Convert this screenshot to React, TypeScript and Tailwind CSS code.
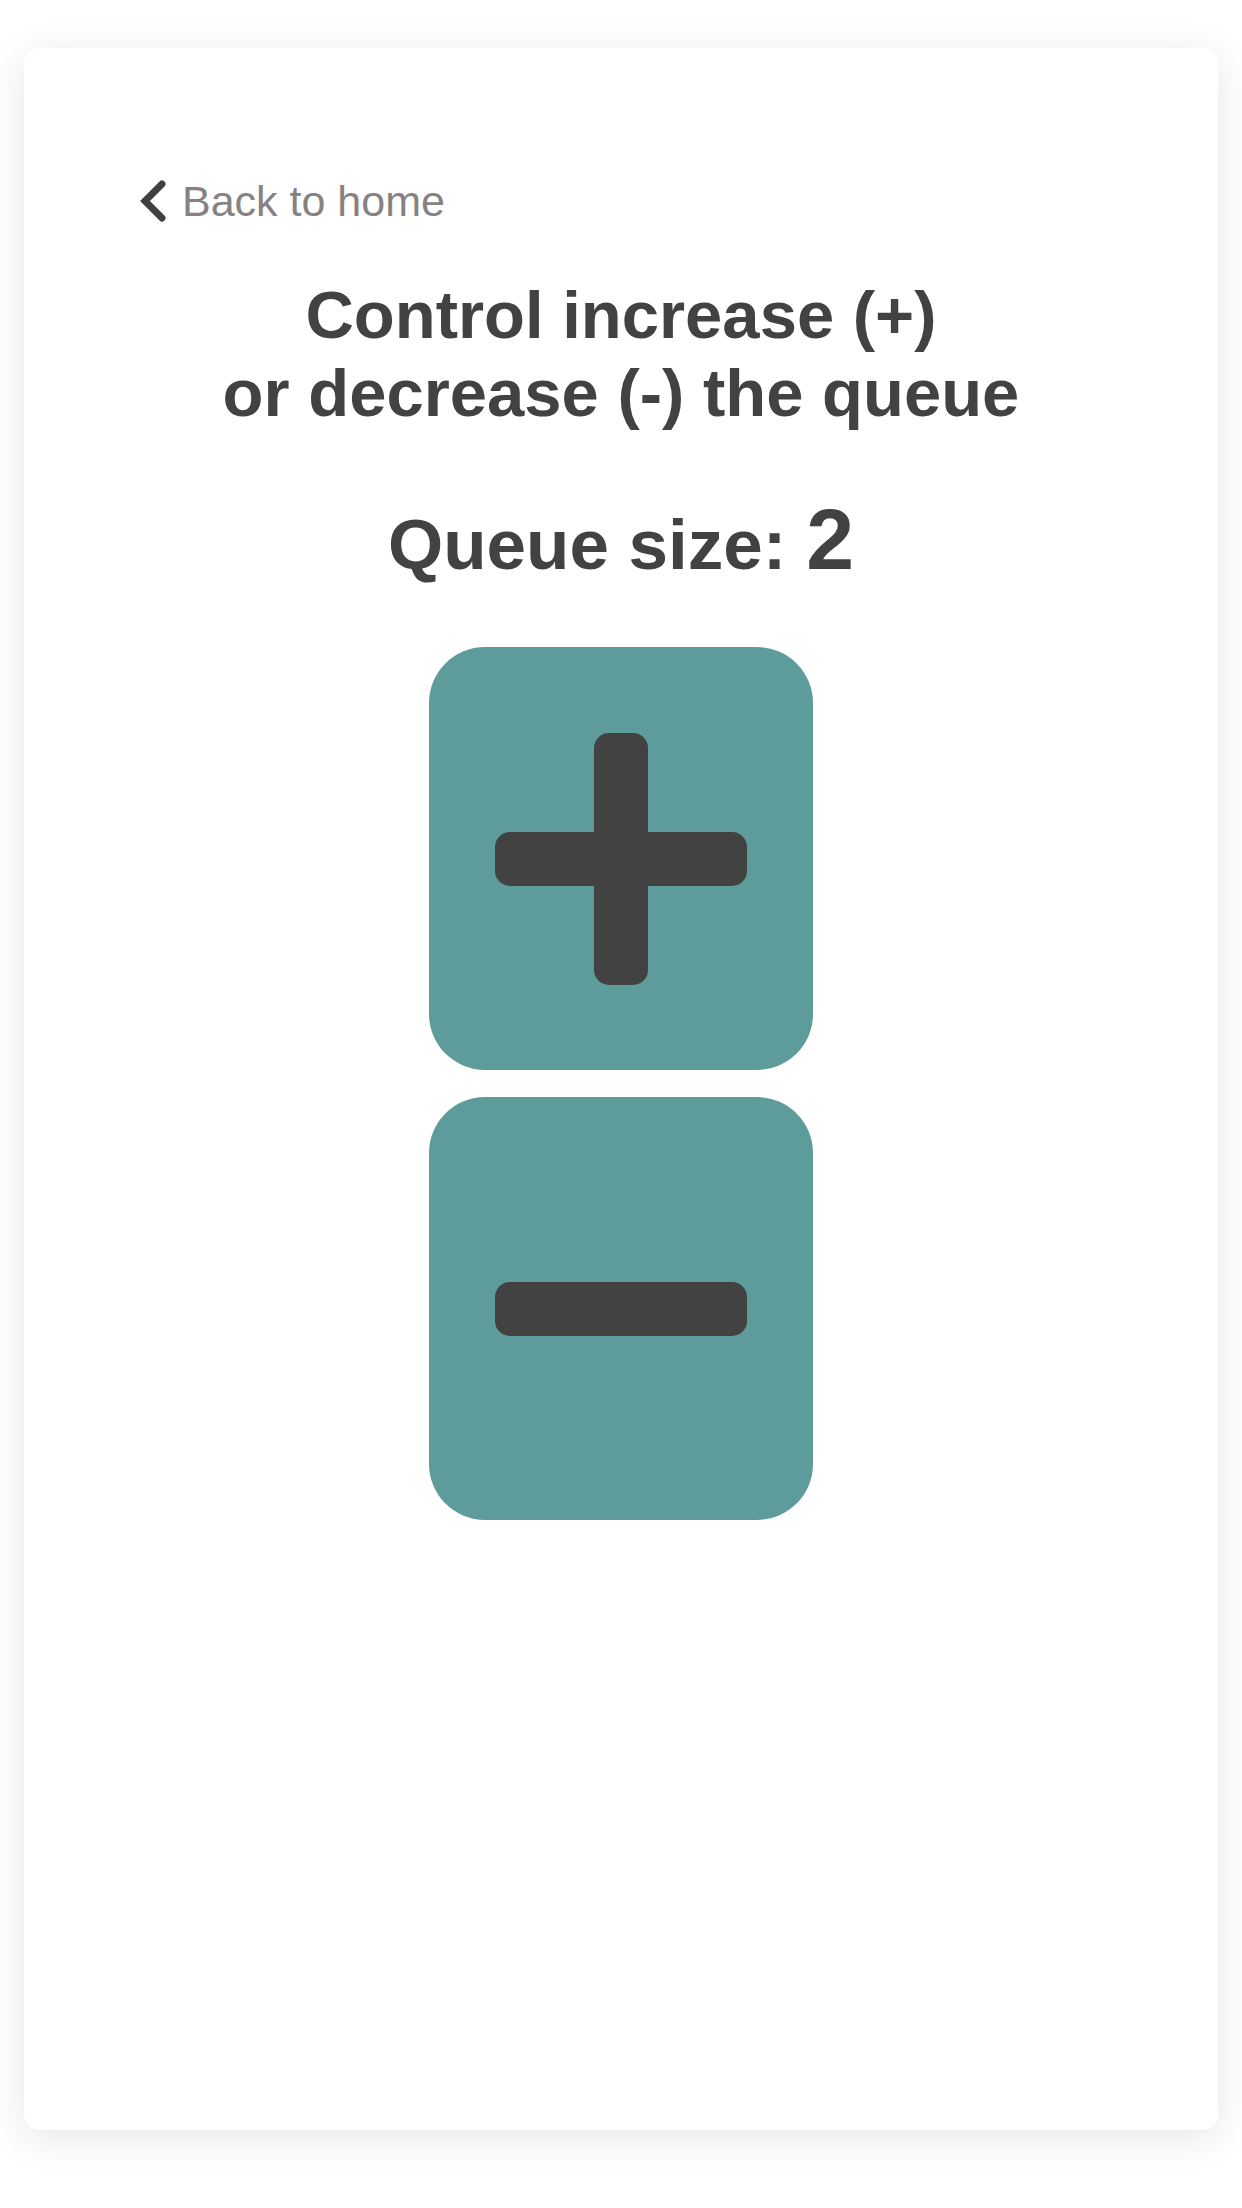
import React, { useState } from 'react';

const PlusIcon = () => (
  <svg width="252" height="252" viewBox="0 0 252 252" fill="#424242">
    <rect x="99" y="0" width="54" height="252" rx="15" />
    <rect x="0" y="99" width="252" height="54" rx="15" />
  </svg>
);

const MinusIcon = () => (
  <svg width="252" height="54" viewBox="0 0 252 54" fill="#424242">
    <rect x="0" y="0" width="252" height="54" rx="15" />
  </svg>
);

const ChevronLeft = () => (
  <svg width="28" height="44" viewBox="0 0 28 44" fill="none">
    <polyline
      points="23,5 6,22 23,39"
      stroke="#404040"
      strokeWidth="7"
      strokeLinecap="round"
      strokeLinejoin="miter"
    />
  </svg>
);

export default function App() {
  const [size, setSize] = useState(2);

  return (
    <div
      className="min-h-screen bg-white px-[24px] pt-[48px] pb-[78px]"
      style={{ fontFamily: '"Liberation Sans", Arial, sans-serif' }}
    >
      <div className="h-[2082px] rounded-[15px] bg-white shadow-[0_8px_40px_rgba(0,0,0,0.1)] pt-[129px]">
        <a href="#" className="ml-[115px] flex w-fit items-center gap-[15px] text-[43px] leading-[48px] text-[#878282]">
          <ChevronLeft />
          <span>Back to home</span>
        </a>

        <h1 className="mt-[51px] text-center text-[67px] font-bold leading-[78px] text-[#424242]">
          Control increase (+)
          <br />
          or decrease (-) the queue
        </h1>

        <h2 className="mt-[64px] text-center text-[71px] font-bold leading-[84px] text-[#424242]">
          Queue size: <span className="text-[86px] leading-none">{size}</span>
        </h2>

        <div className="mt-[60px] flex flex-col items-center gap-[27px]">
          <button
            onClick={() => setSize(size + 1)}
            className="flex h-[423px] w-[384px] items-center justify-center rounded-[56px] bg-[#5e9c9b]"
          >
            <PlusIcon />
          </button>
          <button
            onClick={() => setSize(Math.max(0, size - 1))}
            className="flex h-[423px] w-[384px] items-center justify-center rounded-[56px] bg-[#5e9c9b]"
          >
            <MinusIcon />
          </button>
        </div>
      </div>
    </div>
  );
}
